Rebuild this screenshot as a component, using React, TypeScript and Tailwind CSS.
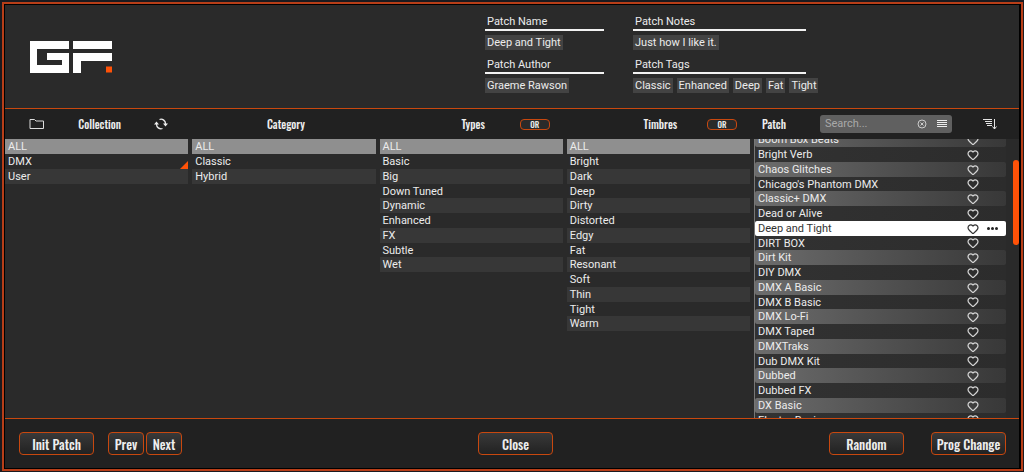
import { Heart } from 'lucide-react';

const TEXT = "font-['Roboto','Noto_Sans',sans-serif] text-[11px] font-normal";
const HEAD = "font-['Oswald','Liberation_Sans_Narrow','Roboto_Condensed',sans-serif] font-medium text-[#ededed]";
// Rows repeat on a 59px cycle of four.
const ROW = 'flex h-[15px] shrink-0 items-center nth-[4n]:h-[14px]';

const TYPES = ['ALL', 'Basic', 'Big', 'Down Tuned', 'Dynamic', 'Enhanced', 'FX', 'Subtle', 'Wet'];
const TIMBRES = [
  'ALL', 'Bright', 'Dark', 'Deep', 'Dirty', 'Distorted', 'Edgy', 'Fat', 'Resonant', 'Soft', 'Thin', 'Tight', 'Warm',
];
const PATCHES = [
  'Boom Box Beats', 'Bright Verb', 'Chaos Glitches', "Chicago's Phantom DMX", 'Classic+ DMX', 'Dead or Alive',
  'Deep and Tight', 'DIRT BOX', 'Dirt Kit', 'DIY DMX', 'DMX A Basic', 'DMX B Basic', 'DMX Lo-Fi', 'DMX Taped',
  'DMXTraks', 'Dub DMX Kit', 'Dubbed', 'Dubbed FX', 'DX Basic', 'Electro Basic',
];
const SELECTED = 'Deep and Tight';

function Logo() {
  return (
    <svg viewBox="0 0 82 32" className="h-8 w-[82px]" aria-label="GF">
      <path fill="#fff" d="M0 0H39V8H7V24H32V19H17V12H39V32H0Z" />
      <path fill="#fff" d="M43 0H82V8H43ZM43 12H82V20H51V32H43Z" />
      <path fill="#ff5208" d="M76 25.500h6v6h-6z" />
    </svg>
  );
}

function Field({ label, values }: { label: string; values: string[] }) {
  return (
    <section>
      <h2 className="border-b-2 border-[#f2f2f2] pl-0.5 leading-[15px]">{label}</h2>
      <ul className="mt-1 flex gap-1 whitespace-nowrap">
        {values.map((value) => (
          <li key={value} className="bg-[#434343] px-0.5 leading-[15px]">
            {value}
          </li>
        ))}
      </ul>
    </section>
  );
}

function OrButton() {
  return (
    <button
      type="button"
      className={`${HEAD} h-[11px] w-[30px] rounded-[4px] border border-[#c8480f] bg-[#2a2a2a] text-[8px] leading-[9px]`}
    >
      OR
    </button>
  );
}

function FilterList({ label, items, flagged }: { label: string; items: string[]; flagged?: string }) {
  return (
    <ul aria-label={label} className="mr-1 min-w-0 flex-1 overflow-hidden">
      {items.map((item) => (
        <li key={item} className={`${ROW} ${item === 'ALL' ? 'bg-[#8f8f8f]' : 'odd:bg-[#373737]'}`}>
          <button type="button" className="flex h-full w-full items-center pl-[3px] text-left leading-[15px]">
            {item}
            {item === flagged && (
              <svg viewBox="0 0 8 8" className="ml-auto h-2 w-2 self-end" aria-hidden="true">
                <path fill="#ff5208" d="M8 0V8H0Z" />
              </svg>
            )}
          </button>
        </li>
      ))}
    </ul>
  );
}

function PatchRow({ name }: { name: string }) {
  const selected = name === SELECTED;
  const tone = selected
    ? 'bg-white text-[#333]'
    : 'bg-linear-to-r odd:from-[#6d6d6d] odd:to-[#383838] even:from-[#323232] even:to-[#2c2c2c]';
  return (
    <li className={`${ROW} ${tone} rounded-[2px]`}>
      <button type="button" className="min-w-0 flex-1 truncate pl-[3px] text-left leading-[15px]">
        {name}
      </button>
      <button type="button" aria-label={`Favourite ${name}`} className="flex w-3">
        <Heart size={12} strokeWidth={2.5} className={selected ? 'text-[#333]' : 'text-[#d4d4d4]'} />
      </button>
      <div className="flex w-[27px] justify-center">
        {selected && (
          <button type="button" aria-label="More" className="flex">
            <svg viewBox="0 0 11 3" className="h-[3px] w-[11px]" fill="#222">
              <circle cx="1.500" cy="1.500" r="1.500" />
              <circle cx="5.500" cy="1.500" r="1.500" />
              <circle cx="9.500" cy="1.500" r="1.500" />
            </svg>
          </button>
        )}
      </div>
    </li>
  );
}

function FooterButton({ children, wide }: { children: string; wide?: boolean }) {
  return (
    <button
      type="button"
      className={`${HEAD} ${wide ? 'w-[75px]' : 'w-9'} h-[23px] rounded-[4px] border border-[#c8480f] bg-linear-to-b from-[#393939] to-[#222] text-[13px] leading-[20px] whitespace-nowrap`}
    >
      {children}
    </button>
  );
}

export default function App() {
  return (
    <div className="h-screen min-h-[320px] bg-[#1b1b20] pt-0.5 pr-px pb-px pl-0.5">
      <main className={`${TEXT} flex h-full flex-col border-2 border-[#b83e18] bg-black p-px pr-0.5 text-[#ececec]`}>
        <header className="flex h-[103px] shrink-0 items-start bg-[#2a2a2a]">
          <div className="flex flex-1 pt-9 pl-[25px]">
            <Logo />
          </div>
          <div className="mr-[198px] grid w-[336px] grid-cols-[119px_173px] gap-x-[29px] gap-y-[7px] pt-[9px]">
            <Field label="Patch Name" values={['Deep and Tight']} />
            <Field label="Patch Notes" values={['Just how I like it.']} />
            <Field label="Patch Author" values={['Graeme Rawson']} />
            <Field label="Patch Tags" values={['Classic', 'Enhanced', 'Deep', 'Fat', 'Tight']} />
          </div>
        </header>

        <div
          className={`${HEAD} grid h-[31px] shrink-0 grid-cols-[repeat(4,minmax(0,1fr))_265px] items-center border-t border-[#c8480f] bg-[#212121] text-[11px]`}
        >
          <div className="flex items-center justify-between px-6">
            <button type="button" aria-label="Open folder">
              <svg viewBox="0 0 16 12" className="h-3 w-4" fill="none" stroke="#ddd">
                <path d="M1 10.500V1.500H5.500L7 3H14.500V10.500Z" />
              </svg>
            </button>
            <span>Collection</span>
            <button type="button" aria-label="Refresh">
              <svg viewBox="0 0 14 12" className="h-3 w-3.5" fill="none" stroke="#eee" strokeWidth="1.300">
                <path d="M5.500 1.500A4.500 4.500 0 0 1 11.500 6M8.500 10.500A4.500 4.500 0 0 1 2.500 6" />
                <path fill="#eee" stroke="none" d="M9 5.500H14L11.500 8.500ZM0 6.500H5L2.500 3.500Z" />
              </svg>
            </button>
          </div>
          <div className="text-center">Category</div>
          <div className="grid grid-cols-[1fr_auto_1fr] items-center">
            <span className="col-start-2">Types</span>
            <span className="flex justify-end pr-[17px]"><OrButton /></span>
          </div>
          <div className="grid grid-cols-[1fr_auto_1fr] items-center">
            <span className="col-start-2">Timbres</span>
            <span className="flex justify-end pr-[17px]"><OrButton /></span>
          </div>
          <div className="flex items-center pl-2">
            <span className="w-[58px]">Patch</span>
            <label className={`${TEXT} flex h-[18px] w-[132px] items-center rounded-[3px] bg-[#606060] px-[5px]`}>
              <input type="search" aria-label="Search" placeholder="Search..." className="min-w-0 flex-1 placeholder:text-[#a9a9a9]" />
              <svg viewBox="0 0 10 10" className="mr-2.5 h-2.5 w-2.5" fill="none" stroke="#ccc">
                <circle cx="5" cy="5" r="4" />
                <path d="M3.500 3.500l3 3M6.500 3.500l-3 3" />
              </svg>
              <svg viewBox="0 0 10 8" className="h-2 w-2.5" stroke="#eee" strokeWidth="1.200">
                <path d="M0 .500H10M0 2.500H10M0 4.500H10M0 6.500H10" />
              </svg>
            </label>
            <button type="button" aria-label="Sort" className="ml-[31px]">
              <svg viewBox="0 0 14 12" className="h-3 w-3.5" fill="none" stroke="#e4e4e4">
                <path d="M0 1.500H9M2 3.500H9M3 5.500H9M4 7.500H9M11.500 1V11M9.500 8.500L11.500 11L13.500 8.500" />
              </svg>
            </button>
          </div>
        </div>

        <div className="flex min-h-0 flex-1 bg-[#2a2a2a]">
          <FilterList label="Collection" items={['ALL', 'DMX', 'User']} flagged="DMX" />
          <FilterList label="Category" items={['ALL', 'Classic', 'Hybrid']} />
          <FilterList label="Types" items={TYPES} />
          <FilterList label="Timbres" items={TIMBRES} />
          <div className="flex w-[265px] overflow-hidden border-l border-[#777]">
            <ul aria-label="Patches" className="-mt-[7px] flex w-[251px] flex-col">
              {PATCHES.map((name) => (
                <PatchRow key={name} name={name} />
              ))}
            </ul>
            <div className="mt-[21px] ml-[7px] h-[85px] w-1.5 rounded-full bg-[#ff5208]" />
          </div>
        </div>

        <footer className="flex h-[50px] shrink-0 items-center border-t border-[#c8480f] bg-[#212121] pr-[13px] pl-3.5">
          <div className="flex flex-1 pr-1.5">
            <FooterButton wide>Init Patch</FooterButton>
            <div className="ml-3.5 flex gap-0.5">
              <FooterButton>Prev</FooterButton>
              <FooterButton>Next</FooterButton>
            </div>
          </div>
          <FooterButton wide>Close</FooterButton>
          <div className="flex flex-1 justify-end gap-[27px]">
            <FooterButton wide>Random</FooterButton>
            <FooterButton wide>Prog Change</FooterButton>
          </div>
        </footer>
      </main>
    </div>
  );
}
